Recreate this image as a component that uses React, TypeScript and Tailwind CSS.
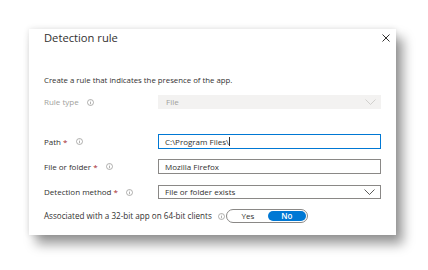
import React from "react";

const Info = ({ className = "" }: { className?: string }) => (
  <svg width="7" height="7" viewBox="0 0 14 14" className={className}>
    <circle cx="7" cy="7" r="6" fill="none" stroke="#8a8886" strokeWidth="1.3" />
    <line x1="7" y1="6" x2="7" y2="10.5" stroke="#8a8886" strokeWidth="1.3" />
    <circle cx="7" cy="4" r="0.8" fill="#8a8886" />
  </svg>
);

const Chevron = ({ color }: { color: string }) => (
  <svg width="11" height="6" viewBox="0 0 22 12">
    <polyline points="1,1 11,11 21,1" fill="none" stroke={color} strokeWidth="1.6" />
  </svg>
);

const Label = ({ text, required }: { text: string; required?: boolean }) => (
  <div className="flex items-center gap-[4px] text-[#323130]">
    <span>
      {text}
      {required && <span className="text-[#a4262c]"> *</span>}
    </span>
    <Info className="ml-[4px]" />
  </div>
);

export default function App() {
  return (
    <div
      className="w-[428px] h-[270px] bg-white pt-[29px] pl-[29px]"
      style={{ fontFamily: '"Open Sans", "Noto Sans", sans-serif' }}
    >
      <div className="w-[367px] h-[206px] bg-white flex flex-col shadow-[0_0_6px_rgba(0,0,0,0.12),7px_9px_11px_rgba(0,0,0,0.4)] text-[8px] leading-[10px]">
        <div className="flex items-center justify-between pl-[15px] pr-[5px] h-[16px] mt-[1px]">
          <span className="text-[11.2px] leading-[16px] text-[#323130]">Detection rule</span>
          <svg width="8" height="8" viewBox="0 0 8 8" className="mr-[1px] mb-[1px]">
            <line x1="0.5" y1="0.5" x2="7.5" y2="7.5" stroke="#323130" strokeWidth="1" />
            <line x1="7.5" y1="0.5" x2="0.5" y2="7.5" stroke="#323130" strokeWidth="1" />
          </svg>
        </div>
        <div className="flex flex-col px-[15px]">
          <div className="mt-[29px] h-[10px] text-[#323130] text-[7.8px]">
            Create a rule that indicates the presence of the app.
          </div>
          <div className="mt-[10px] grid grid-cols-[114px_223px] items-center h-[14px]">
            <div className="flex items-center gap-[4px] text-[#a19f9d]">
              <span>Rule type</span>
              <Info className="ml-[4px]" />
            </div>
            <div className="h-[14px] bg-[#f3f2f1] flex items-center justify-between pl-[8px] pr-[5px] text-[#a19f9d]">
              <span>File</span>
              <Chevron color="#c8c6c4" />
            </div>
          </div>
          <div className="mt-[25px] grid grid-cols-[114px_223px] items-center h-[15px]">
            <Label text="Path" required />
            <div className="h-[15px] border-[1.5px] border-[#0078d4] flex items-center pl-[6px] text-[#323130]">
              <span>C:\Program Files\</span>
              <span className="w-[0.6px] h-[9px] bg-[#323130]" />
            </div>
          </div>
          <div className="mt-[10px] grid grid-cols-[114px_223px] items-center h-[15px]">
            <Label text="File or folder" required />
            <div className="h-[15px] border border-[#8a8886] flex items-center pl-[6px] text-[#323130]">
              Mozilla Firefox
            </div>
          </div>
          <div className="mt-[11px] grid grid-cols-[114px_223px] items-center h-[14px]">
            <Label text="Detection method" required />
            <div className="h-[14px] border border-[#8a8886] flex items-center justify-between pl-[6px] pr-[5px] text-[#323130]">
              <span>File or folder exists</span>
              <Chevron color="#323130" />
            </div>
          </div>
          <div className="mt-[10px] flex items-center h-[14px] text-[#323130]">
            <span className="text-[8.1px]">Associated with a 32-bit app on 64-bit clients</span>
            <Info className="ml-[6px]" />
            <div className="ml-[1px] w-[82px] h-[14px] rounded-full border border-[#8a8886] flex items-center p-[1px]">
              <div className="flex-1 text-center text-[#323130]">Yes</div>
              <div className="w-[38px] h-[10px] rounded-full bg-[#0078d4] text-white flex items-center justify-center font-semibold">
                No
              </div>
            </div>
          </div>
        </div>
      </div>
    </div>
  );
}
